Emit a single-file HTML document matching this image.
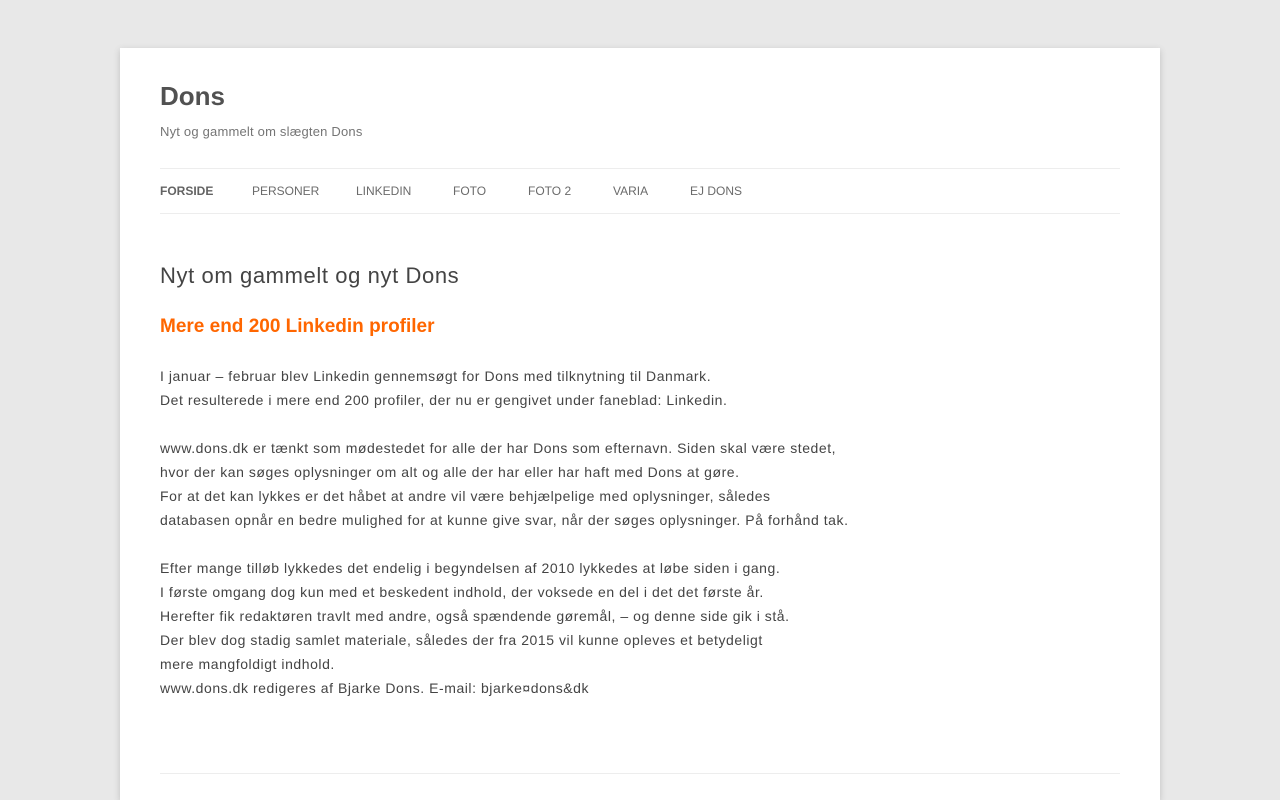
<!DOCTYPE html>
<html><head><meta charset="utf-8"><style>
html,body{margin:0;padding:0}
body{background:#e8e8e8;font-family:"Liberation Sans",sans-serif;color:#444;width:1280px;height:800px;overflow:hidden;position:relative}
.page{position:absolute;left:120px;top:48px;width:1040px;height:752px;background:#fff;box-shadow:0 2px 6px rgba(100,100,100,.3);overflow:hidden}
.in{position:absolute;left:40px;right:40px}
h1.site{position:absolute;top:30px;left:40px;margin:0;font-size:26px;font-weight:bold;color:#515151;line-height:36px}
.desc{position:absolute;top:74px;left:40px;font-size:13px;color:#757575;line-height:20px;letter-spacing:0.2px}
.nav{top:120px;height:44px;border-top:1px solid #ededed;border-bottom:1px solid #ededed}
.nav span{position:absolute;top:14px;font-size:12px;color:#6a6a6a;line-height:16px}
h2{position:absolute;left:40px;top:212px;margin:0;font-size:22px;font-weight:normal;color:#444;line-height:32px;letter-spacing:0.6px}
h3{position:absolute;left:40px;top:264px;margin:0;font-size:19px;font-weight:bold;color:#ff6600;line-height:30px}
.txt{position:absolute;left:40px;top:316px;font-size:14px;line-height:24px;color:#444;white-space:nowrap;letter-spacing:0.55px}
.txt p{margin:0 0 24px}
.bot{top:725px;border-top:1px solid #ededed}
</style></head><body>
<div class="page">
<h1 class="site">Dons</h1>
<div class="desc">Nyt og gammelt om slægten Dons</div>
<div class="in nav">
<span style="left:0;font-weight:bold;color:#636363">FORSIDE</span>
<span style="left:92px">PERSONER</span>
<span style="left:196px">LINKEDIN</span>
<span style="left:293px">FOTO</span>
<span style="left:368px">FOTO 2</span>
<span style="left:453px">VARIA</span>
<span style="left:530px">EJ DONS</span>
</div>
<h2>Nyt om gammelt og nyt Dons</h2>
<h3>Mere end 200 Linkedin profiler</h3>
<div class="txt">
<p>I januar – februar blev Linkedin gennemsøgt for Dons med tilknytning til Danmark.<br>Det resulterede i mere end 200 profiler, der nu er gengivet under faneblad: Linkedin.</p>
<p>www.dons.dk er tænkt som mødestedet for alle der har Dons som efternavn. Siden skal være stedet,<br>hvor der kan søges oplysninger om alt og alle der har eller har haft med Dons at gøre.<br>For at det kan lykkes er det håbet at andre vil være behjælpelige med oplysninger, således<br>databasen opnår en bedre mulighed for at kunne give svar, når der søges oplysninger. På forhånd tak.</p>
<p>Efter mange tilløb lykkedes det endelig i begyndelsen af 2010 lykkedes at løbe siden i gang.<br>I første omgang dog kun med et beskedent indhold, der voksede en del i det det første år.<br>Herefter fik redaktøren travlt med andre, også spændende gøremål, – og denne side gik i stå.<br>Der blev dog stadig samlet materiale, således der fra 2015 vil kunne opleves et betydeligt<br>mere mangfoldigt indhold.<br>www.dons.dk redigeres af Bjarke Dons. E-mail: bjarke¤dons&amp;dk</p>
</div>
<div class="in bot"></div>
</div>
</body></html>
